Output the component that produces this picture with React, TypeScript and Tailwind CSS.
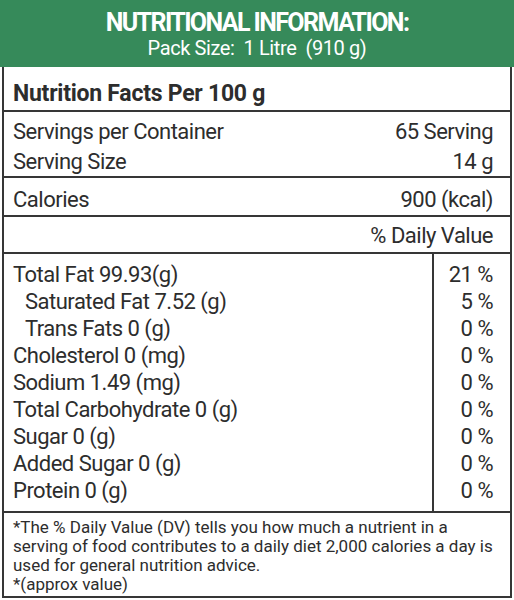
import React from "react";

const font = { fontFamily: '"Roboto", "Liberation Sans", sans-serif' };

const nutrients = [
  { label: "Total Fat 99.93(g)", dv: "21 %", indent: false },
  { label: "Saturated Fat 7.52 (g)", dv: "5 %", indent: true },
  { label: "Trans Fats 0 (g)", dv: "0 %", indent: true },
  { label: "Cholesterol 0 (mg)", dv: "0 %", indent: false },
  { label: "Sodium 1.49 (mg)", dv: "0 %", indent: false },
  { label: "Total Carbohydrate 0 (g)", dv: "0 %", indent: false },
  { label: "Sugar 0 (g)", dv: "0 %", indent: false },
  { label: "Added Sugar 0 (g)", dv: "0 %", indent: false },
  { label: "Protein 0 (g)", dv: "0 %", indent: false },
];

export default function App() {
  return (
    <div className="w-[514px] h-[600px] bg-white text-[#2d2d2d] overflow-hidden" style={font}>
      <div className="h-[67px] bg-[#368a5a] text-white flex flex-col items-center pt-[9px]">
        <h1 className="text-[25px] font-bold leading-[28px] tracking-[-1.6px]">NUTRITIONAL INFORMATION:</h1>
        <p className="text-[20px] leading-[22px] tracking-[-0.4px]">Pack Size:&nbsp; 1 Litre&nbsp; (910 g)</p>
      </div>
      <div className="mx-[2px] border-x-2 border-b-2 border-[#363636] tracking-[-0.5px]">
        <div className="h-[45px] flex items-center pt-[11px] pl-[9px] pr-[17px] border-b-2 border-[#363636]">
          <h2 className="text-[23px] font-bold tracking-[-0.25px]">Nutrition Facts Per 100 g</h2>
        </div>
        <div className="h-[66px] flex flex-col justify-center pt-[6px] pl-[9px] pr-[17px] text-[22px] leading-[30px] border-b-2 border-[#363636]">
          <div className="flex justify-between">
            <span>Servings per Container</span>
            <span>65 Serving</span>
          </div>
          <div className="flex justify-between">
            <span>Serving Size</span>
            <span>14 g</span>
          </div>
        </div>
        <div className="h-[39px] flex items-center justify-between pt-[6px] pl-[9px] pr-[17px] text-[22px] border-b-2 border-[#363636]">
          <span>Calories</span>
          <span>900 (kcal)</span>
        </div>
        <div className="h-[37px] flex items-center justify-end pt-[2px] pl-[9px] pr-[17px] text-[22px] border-b-2 border-[#363636]">
          <span>% Daily Value</span>
        </div>
        <div className="flex border-b-2 border-[#363636] text-[22px] leading-[27px] py-[7px]">
          <div className="flex-1 pl-[9px]">
            {nutrients.map((n) => (
              <div key={n.label} className={n.indent ? "pl-[12px]" : ""}>
                {n.label}
              </div>
            ))}
          </div>
          <div className="w-[78px] border-l-2 border-[#363636] -my-[7px] py-[7px] pr-[17px] text-right">
            {nutrients.map((n) => (
              <div key={n.label}>{n.dv}</div>
            ))}
          </div>
        </div>
        <div className="h-[83px] pl-[9px] pr-[11px] pt-[5px] text-[17px] leading-[19px] tracking-normal">
          <p>*The % Daily Value (DV) tells you how much a nutrient in a</p>
          <p>serving of food contributes to a daily diet 2,000 calories a day is</p>
          <p>used for general nutrition advice.</p>
          <p>*(approx value)</p>
        </div>
      </div>
    </div>
  );
}
